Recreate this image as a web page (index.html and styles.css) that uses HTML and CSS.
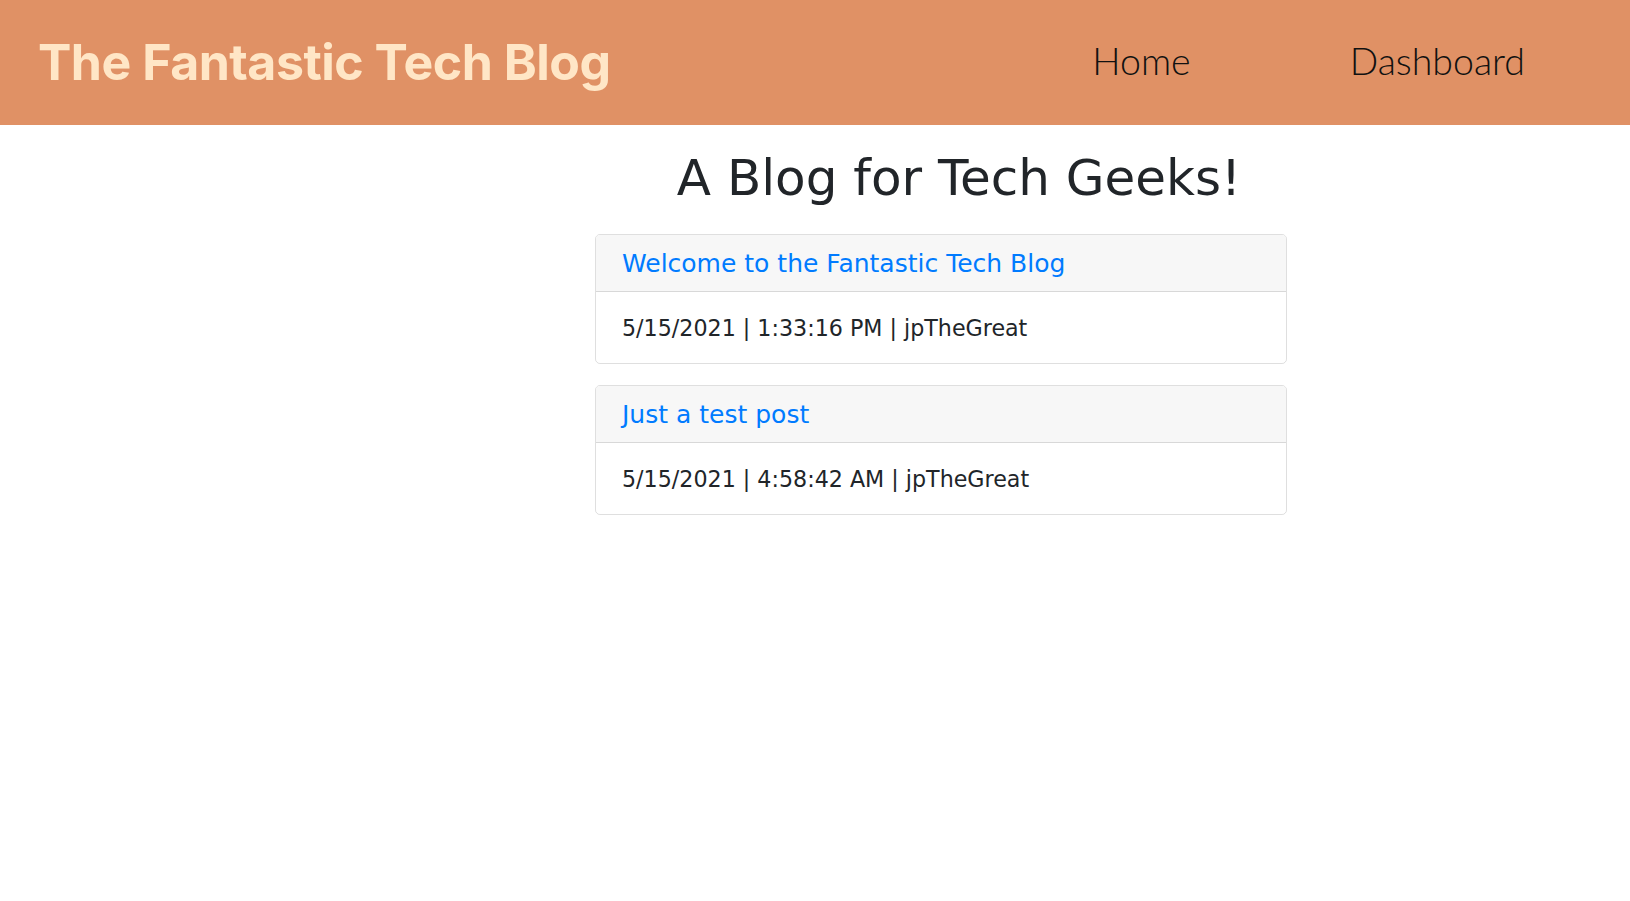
FILE: index.html
```html
<!DOCTYPE html>
<html lang="en">
<head>
<meta charset="utf-8">
<title>The Fantastic Tech Blog</title>
<link rel="stylesheet" href="styles.css">
</head>
<body>
<header class="topbar">
  <h1 class="brand">The Fantastic Tech Blog</h1>
  <nav class="nav">
    <a class="nav-link" href="#">Home</a>
    <a class="nav-link" href="#">Dashboard</a>
  </nav>
</header>
<main class="main">
  <h2 class="page-title">A Blog for Tech Geeks!</h2>
  <div class="posts">
    <article class="card">
      <div class="card-header"><a class="post-link" href="#">Welcome to the Fantastic Tech Blog</a></div>
      <div class="card-body">5/15/2021 | 1:33:16 PM | jpTheGreat</div>
    </article>
    <article class="card">
      <div class="card-header"><a class="post-link" href="#">Just a test post</a></div>
      <div class="card-body">5/15/2021 | 4:58:42 AM | jpTheGreat</div>
    </article>
  </div>
</main>
</body>
</html>
```

FILE: styles.css
```css
* { box-sizing: border-box; }
html, body { margin: 0; padding: 0; }
body {
  font-family: "DejaVu Sans", Verdana, sans-serif;
  color: #212529;
  background: #fff;
}
.topbar {
  height: 125px;
  background: #e09165;
  display: flex;
  align-items: center;
  justify-content: space-between;
  padding: 0 104px 0 38px;
}
.brand {
  margin: 0 0 2px;
  font-family: "Inter", "Open Sans", sans-serif;
  font-weight: 700;
  font-size: 50px;
  color: #ffe6c6;
  letter-spacing: -0.5px;
}
.nav {
  display: flex;
  gap: 159px;
  padding-bottom: 5px;
  padding-right: 1px;
}
.nav-link {
  font-family: "Lato Light", "Lato", sans-serif;
  font-weight: 300;
  font-size: 37.5px;
  color: #111;
  text-decoration: none;
}
.main {
  display: flex;
  flex-direction: column;
  align-items: flex-start;
  padding-left: 595px;
}
.page-title {
  width: 728px;
  text-align: center;
  margin: 23px 0 26px;
  font-weight: 400;
  font-size: 50px;
  line-height: 1.2;
}
.posts {
  width: 692px;
  display: flex;
  flex-direction: column;
  gap: 21px;
}
.card {
  border: 1px solid rgba(0,0,0,0.125);
  border-radius: 5px;
  overflow: hidden;
}
.card-header {
  background: #f7f7f7;
  border-bottom: 1px solid rgba(0,0,0,0.125);
  height: 57px;
  display: flex;
  align-items: center;
  padding: 0 26px;
}
.post-link {
  color: #007bff;
  text-decoration: none;
  font-size: 25px;
}
.card-body {
  height: 71px;
  display: flex;
  align-items: center;
  padding: 0 26px;
  font-size: 22.2px;
}
```
